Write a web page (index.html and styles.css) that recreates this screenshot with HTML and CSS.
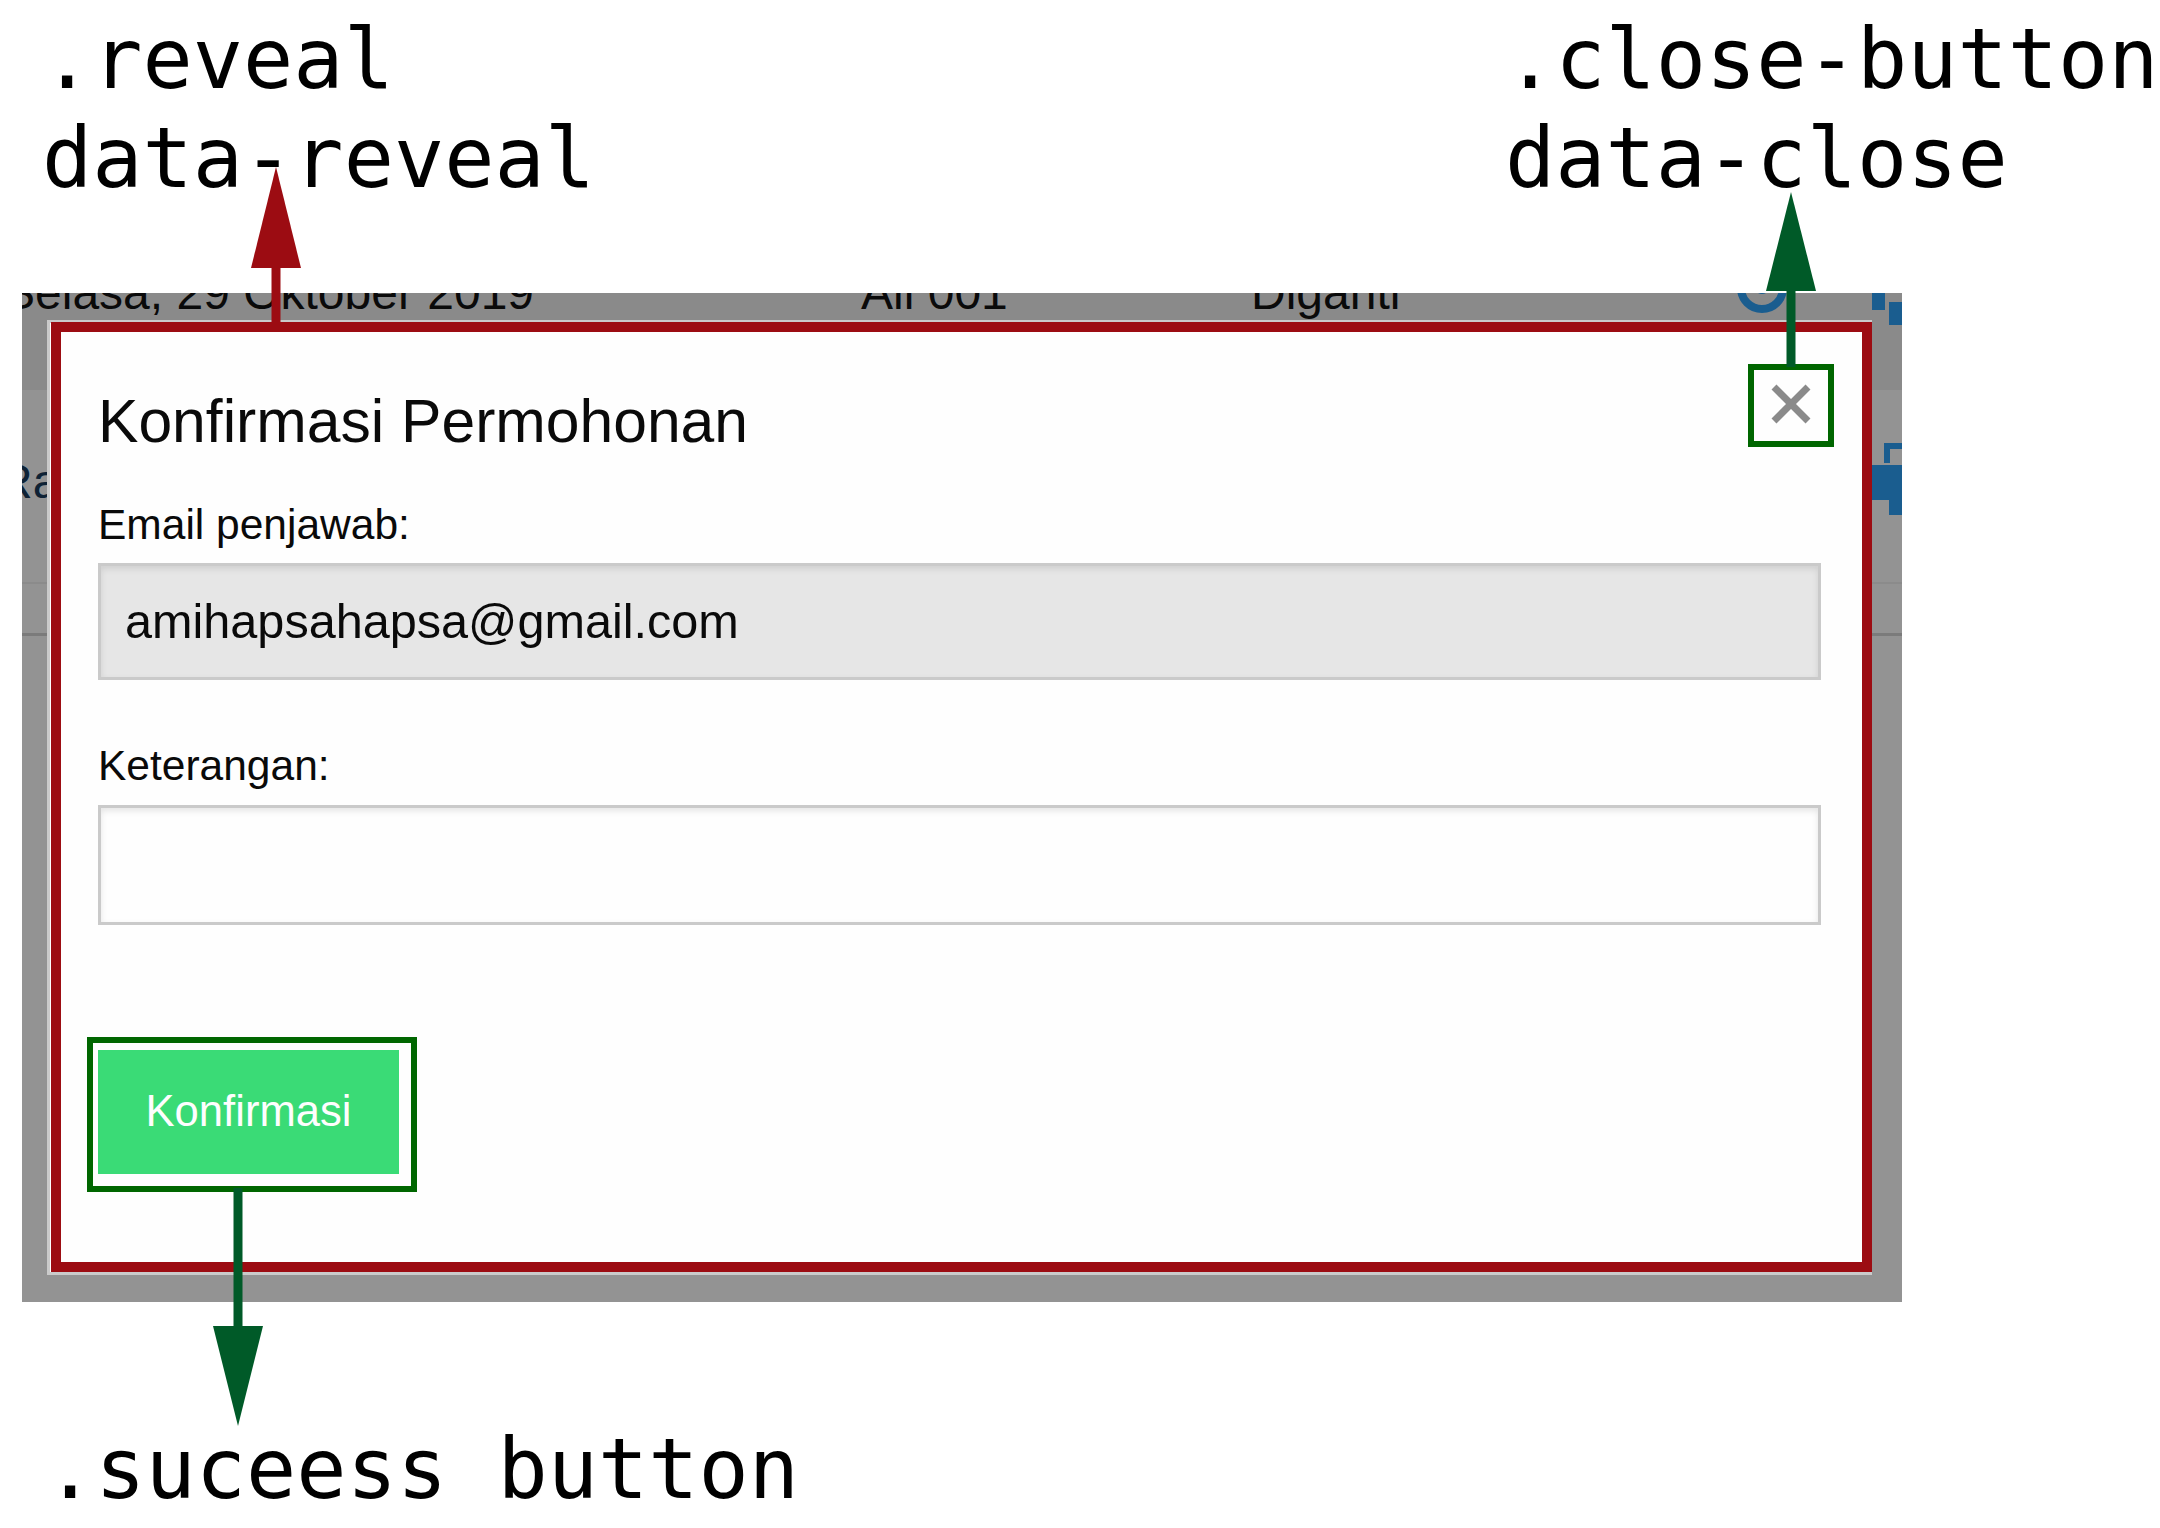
FILE: index.html
```html
<!DOCTYPE html>
<html lang="id">
<head>
<meta charset="utf-8">
<title>Reveal modal annotation</title>
<link rel="stylesheet" href="styles.css">
</head>
<body>
<div class="canvas">
  <div class="labels-top">
    <div class="label-group">
      <div class="code-line">.reveal</div>
      <div class="code-line">data-reveal</div>
    </div>
    <div class="label-group">
      <div class="code-line">.close-button</div>
      <div class="code-line">data-close</div>
    </div>
  </div>

  <div class="shot">
    <div class="bg-table">
      <div class="row row-first">
        <span class="cell c-date">Selasa, 29 Oktober 2019</span>
        <span class="cell c-room">All 001</span>
        <span class="cell c-status">Diganti</span>
        <span class="cell c-eye">
          <svg class="eye-icon" width="52" height="52" viewBox="0 0 52 52"><circle cx="26" cy="26" r="21" fill="none" stroke="#1a5d8f" stroke-width="8"/><circle cx="26" cy="24" r="8" fill="#1a5d8f"/></svg>
        </span>
        <span class="cell c-copy">
          <svg class="copy-icon" width="30" height="40" viewBox="0 0 30 40"><rect x="0" y="0" width="13" height="17" fill="#1a5d8f"/><rect x="17" y="9" width="13" height="23" fill="#1a5d8f"/></svg>
        </span>
      </div>
      <div class="row row-second">
        <span class="cell c-name">Rapat Koordinasi</span>
        <span class="cell c-tree">
          <svg class="tree-icon" width="32" height="72" viewBox="0 0 32 72"><path d="M17 3 H32 M17 0 V20" stroke="#1a5d8f" stroke-width="6" fill="none"/><rect x="0" y="22" width="32" height="35" fill="#1a5d8f"/><rect x="19" y="50" width="13" height="22" fill="#1a5d8f"/></svg>
        </span>
      </div>
      <div class="row row-third"></div>
      <div class="row row-rest"></div>
    </div>

    <div class="reveal">
      <h4 class="reveal-title">Konfirmasi Permohonan</h4>
      <button class="close-button" type="button" aria-label="Close">
        <svg width="40" height="40" viewBox="0 0 40 40"><path d="M3 3 L37 37 M37 3 L3 37" stroke="#8a8a8a" stroke-width="7" fill="none"/></svg>
      </button>
      <label class="field-label">Email penjawab:
        <input class="field-input is-readonly" type="text" value="amihapsahapsa@gmail.com" readonly>
      </label>
      <label class="field-label">Keterangan:
        <input class="field-input is-note" type="text" value="">
      </label>
      <button class="button success" type="button">Konfirmasi</button>
    </div>
  </div>

  <div class="label-bottom code-line">.suceess button</div>

  <div class="mark mark-reveal"></div>
  <div class="mark mark-close"></div>
  <div class="mark mark-success"></div>

  <svg class="arrows" width="2160" height="1528" viewBox="0 0 2160 1528">
    <line x1="276" y1="327" x2="276" y2="262" stroke="#9c0c12" stroke-width="9"/>
    <polygon points="276,167 251,268 301,268" fill="#9c0c12"/>
    <line x1="1791" y1="367" x2="1791" y2="285" stroke="#005a28" stroke-width="9"/>
    <polygon points="1791,192 1766,291 1816,291" fill="#005a28"/>
    <line x1="238" y1="1188" x2="238" y2="1332" stroke="#005a28" stroke-width="9"/>
    <polygon points="213,1326 263,1326 238,1426" fill="#005a28"/>
  </svg>
</div>
</body>
</html>
```

FILE: styles.css
```css
html, body {
  margin: 0;
  padding: 0;
  background: #ffffff;
  overflow: hidden;
}

.canvas {
  position: relative;
  width: 2160px;
  height: 1528px;
  overflow: hidden;
  background: #ffffff;
}

.code-line {
  font-family: "DejaVu Sans Mono", monospace;
  font-size: 83.5px;
  line-height: 99px;
  color: #000000;
  white-space: pre;
}

.labels-top {
  display: grid;
  grid-template-columns: 1463px auto;
  padding: 10px 0 0 42px;
  height: 198px;
}

.shot {
  position: relative;
  margin: 85px 0 0 22px;
  width: 1880px;
  height: 1009px;
  overflow: hidden;
  background: #929292;
}

.bg-table {
  font-family: "Liberation Sans", Arial, sans-serif;
  font-size: 48px;
  line-height: 56px;
  color: #0a0a0a;
}

.row {
  display: flex;
  box-sizing: border-box;
}

.cell {
  display: block;
  white-space: nowrap;
  flex: none;
}

.row-first {
  height: 140px;
  margin: -43px 0 0 -19px;
  padding-top: 15px;
  background: #8a8a8a;
}

.c-date { width: 858px; }
.c-room { width: 390px; }
.c-status { width: 485px; }
.c-eye { width: 136px; }
.c-copy { width: 30px; }

.eye-icon {
  display: block;
  margin-top: -3px;
}

.copy-icon {
  display: block;
  margin-top: 28px;
}

.row-second {
  height: 194px;
  padding-top: 64px;
  background: #939393;
  border-bottom: 2px solid #8b8b8b;
}

.c-name {
  color: #0e2235;
  margin-left: -24px;
}

.c-tree {
  margin-left: auto;
  margin-top: -11px;
}

.tree-icon {
  display: block;
}

.row-third {
  height: 49px;
  background: #939393;
  border-bottom: 3px solid #7b7b7b;
  box-sizing: content-box;
}

.row-rest {
  height: 700px;
  background: #939393;
}

.reveal {
  position: absolute;
  left: 25px;
  top: 27px;
  width: 1825px;
  box-sizing: border-box;
  border: 3px solid #cacaca;
  background: #fefefe;
  padding: 56px 48px 50px;
  font-family: "Liberation Sans", Arial, sans-serif;
  color: #0a0a0a;
}

.reveal-title {
  margin: 0 0 24px;
  font-size: 60.6px;
  line-height: 84px;
  font-weight: normal;
}

.close-button {
  position: absolute;
  left: 1721px;
  top: 61px;
  width: 40px;
  height: 40px;
  padding: 0;
  border: none;
  background: none;
}

.close-button svg {
  display: block;
}

.field-label {
  display: block;
  font-size: 42.5px;
  line-height: 75.6px;
  margin: 0;
}

.field-input {
  display: block;
  box-sizing: border-box;
  width: 100%;
  height: 117px;
  margin: 0 0 48px;
  padding: 0 24px;
  border: 3px solid #cacaca;
  background: #fefefe;
  box-shadow: inset 0 3px 6px rgba(10, 10, 10, 0.1);
  font-family: "Liberation Sans", Arial, sans-serif;
  font-size: 48.6px;
  color: #0a0a0a;
  outline: none;
}

.field-input.is-readonly {
  background: #e6e6e6;
}

.field-input.is-note {
  height: 120px;
  margin-top: 2px;
  margin-bottom: 125px;
}

.button {
  display: block;
  margin: 0 0 48px;
  padding: 0;
  border: none;
  font-family: "Liberation Sans", Arial, sans-serif;
  font-size: 43.6px;
  line-height: 1;
}

.button.success {
  width: 301px;
  height: 124px;
  background: #3adb76;
  color: #fefefe;
}

.label-bottom {
  margin: 118px 0 0 45px;
}

.mark {
  position: absolute;
  box-sizing: border-box;
}

.mark-reveal {
  left: 51px;
  top: 322px;
  width: 1821px;
  height: 950px;
  border: 10px solid #9c0c12;
}

.mark-close {
  left: 1748px;
  top: 364px;
  width: 86px;
  height: 83px;
  border: 6px solid #006600;
}

.mark-success {
  left: 87px;
  top: 1037px;
  width: 330px;
  height: 155px;
  border: 6px solid #006600;
}

.arrows {
  position: absolute;
  left: 0;
  top: 0;
  pointer-events: none;
}
```
